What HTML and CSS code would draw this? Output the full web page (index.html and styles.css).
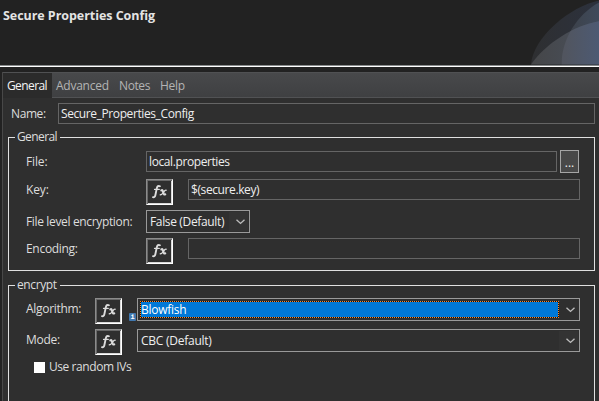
FILE: index.html
```html
<!DOCTYPE html>
<html lang="en">
<head>
<meta charset="utf-8">
<title>Secure Properties Config</title>
<link rel="stylesheet" href="styles.css">
</head>
<body>
<svg class="defs" width="0" height="0" aria-hidden="true">
  <symbol id="fx" viewBox="0 0 17 16">
    <g fill="none" stroke="#dcdcdc" stroke-linecap="round">
      <path stroke-width="1.9" d="M8.2 2.3C7 1.5 6.3 2.2 5.8 4.4L4.4 11C4 12.8 3.2 13.6 2 13.2"/>
      <path stroke-width="1.4" d="M8 2.2H9.2M3.6 5.4H8.2"/>
      <path stroke-width="2" d="M10.3 6.4C11.5 5.6 11.8 6.6 12.2 8.2S13 11.1 14.3 10.4"/>
      <path stroke-width="1.4" d="M15 6.2C13.3 5.7 11.4 11.3 9.3 10.8"/>
    </g>
  </symbol>
  <symbol id="chevron" viewBox="0 0 9 6">
    <path fill="none" stroke="#bcbcbc" stroke-width="1.4" d="M.5 .8L4.5 4.4L8.5 .8"/>
  </symbol>
</svg>
<header class="header">
  <h1>Secure Properties Config</h1>
  <svg class="arcs" width="69" height="65" viewBox="0 0 69 65">
    <defs>
      <linearGradient id="g1"><stop offset="0" stop-color="#2e2f31"/><stop offset="1" stop-color="#2c313d"/></linearGradient>
      <linearGradient id="g2"><stop offset="0" stop-color="#454648"/><stop offset="1" stop-color="#49505d"/></linearGradient>
      <linearGradient id="g3"><stop offset="0" stop-color="#3c3f45"/><stop offset="1" stop-color="#3f4a5b"/></linearGradient>
      <linearGradient id="g4"><stop offset="0" stop-color="#515257"/><stop offset=".5" stop-color="#51555f"/><stop offset="1" stop-color="#4d5a73"/></linearGradient>
      <clipPath id="inner"><path d="M31 65C31 39 47 14 69 2V65Z"/></clipPath>
    </defs>
    <path fill="url(#g1)" d="M0 65C2 37 40 6 69 0V65Z"/>
    <path fill="url(#g3)" d="M31 65C31 39 47 14 69 2V65Z"/>
    <path fill="url(#g2)" d="M0 65C14 44 44 25 69 21V65Z"/>
    <g clip-path="url(#inner)"><path fill="url(#g4)" d="M0 65C14 44 44 25 69 21V65Z"/></g>
  </svg>
</header>
<main class="editor">
  <nav class="tabs">
    <span class="tab active"><span class="t-general">General</span></span>
    <span class="tab t-advanced">Advanced</span>
    <span class="tab t-notes">Notes</span>
    <span class="tab t-help">Help</span>
  </nav>
  <div class="row name-row"><label class="t-name">Name:</label><div class="input t-value">Secure_Properties_Config</div></div>
  <fieldset class="general">
    <legend class="t-general">General</legend>
    <div class="row file"><label>File:</label><div class="input t-local">local.properties</div><button class="browse">...</button></div>
    <div class="row key"><label>Key:</label><span class="fx"><svg><use href="#fx"/></svg></span><div class="input t-key">$(secure.key)</div></div>
    <div class="row level"><label class="t-level">File level encryption:</label><div class="combo"><span class="t-false">False (Default)</span><i><svg><use href="#chevron"/></svg></i></div></div>
    <div class="row key"><label class="t-encoding">Encoding:</label><span class="fx"><svg><use href="#fx"/></svg></span><div class="input"></div></div>
  </fieldset>
  <fieldset class="encrypt">
    <legend class="t-encrypt">encrypt</legend>
    <div class="row option"><label class="t-algorithm">Algorithm:</label><span class="fx"><svg><use href="#fx"/></svg></span><div class="combo focus"><b class="info">i</b><span class="t-blow">Blowfish</span><i><svg><use href="#chevron"/></svg></i></div></div>
    <div class="row option"><label class="t-mode">Mode:</label><span class="fx"><svg><use href="#fx"/></svg></span><div class="combo"><span class="t-cbc">CBC (Default)</span><i><svg><use href="#chevron"/></svg></i></div></div>
    <div class="check"><span class="box"></span><span class="t-random">Use random IVs</span></div>
  </fieldset>
</main>
</body>
</html>
```
FILE: styles.css
```css
* { box-sizing: border-box; }
html, body { height: 100%; }
body {
  margin: 0;
  overflow: hidden;
  background: #222;
  color: #ddd;
  font: 12px/16px "Open Sans", "Noto Sans", sans-serif;
  letter-spacing: -0.15px;
  white-space: nowrap;
}
.defs { position: absolute; }
.header {
  display: flex;
  justify-content: space-between;
  height: 67px;
  border-bottom: 1px solid #fff;
  box-shadow: inset 0 -1px #888b8c;
}
h1 { margin: 8px 0 0 3px; font-size: 12.5px; line-height: 16px; font-weight: 700; color: #e4e4e4; letter-spacing: -0.05px; }
.arcs { width: 68px; height: 65px; }
.editor {
  height: 329px;
  margin: 5px 0 0 2px;
  border-left: 1px solid #484848;
  background: #2f2f2f;
}
.tabs {
  display: flex;
  height: 26px;
  background: linear-gradient(#48494b, #3f4042);
  border-top: 1px solid #505153;
  border-bottom: 1px solid #515254;
  color: #b4b4b4;
}
.tab { height: 25px; line-height: 26px; }
.active { width: 49px; padding-left: 4px; background: #2b2b2b; color: #f4f4f4; }
.t-general { letter-spacing: -0.6px; }
.t-encrypt { letter-spacing: -0.4px; }
.t-advanced { width: 63px; margin-left: 4px; letter-spacing: -0.25px; }
.t-notes { width: 41px; letter-spacing: -0.4px; }
.t-help { letter-spacing: -0.3px; }
.t-name { letter-spacing: -0.4px; }
.t-value, .t-local, .t-key { letter-spacing: -0.4px; }
.t-level, .t-false { letter-spacing: -0.35px; }
.t-encoding, .t-algorithm, .t-mode { letter-spacing: -0.3px; }
.t-blow, .t-cbc { letter-spacing: -0.25px; }
.t-random { letter-spacing: -0.43px; }
.row { display: flex; }
.row label { flex: none; }
.input {
  flex: 1;
  height: 21px;
  padding-left: 2px;
  border: 1px solid #656565;
  color: #eee;
  line-height: 20px;
}
.name-row { height: 21px; margin: 5px 4px 0 8px; }
.name-row label { width: 47px; line-height: 22px; }
fieldset {
  width: 587px;
  min-width: 0;
  margin: 0 0 0 5px;
  padding: 0;
  border: 1px solid #e0e0e0;
}
legend { margin-left: 6px; padding: 0 3px 0 2px; line-height: 16px; }
.general { height: 142px; margin-top: 5px; }
.encrypt { height: 135px; margin-top: 6px; }
fieldset .row { margin-left: 17px; }
.general .row { margin-right: 14px; }
.general label { width: 120px; line-height: 21px; }
.general .t-level { line-height: 24px; }
.file { height: 23px; margin-top: 5px; }
.file .input { flex: none; width: 411px; margin-top: 1px; }
.file label { margin-top: 1px; }
.browse {
  width: 19px;
  height: 23px;
  margin-left: 3px;
  padding: 2px 0 0;
  border: 1px solid #a5a5a5;
  background: #484848;
  color: #eee;
  font: inherit;
}
.key { height: 27px; margin-top: 6px; }
.key .input { margin-left: 15px; }
.fx {
  flex: none;
  display: flex;
  width: 27px;
  height: 26px;
  border: 1px solid #8c8c8c;
  border-right-color: #fff;
  border-bottom-color: #fff;
  box-shadow: inset 1px 1px #686868, inset -1px -1px #d8d8d8;
  padding: 4px 0 0 4px;
}
.fx svg { width: 17px; height: 16px; }
.combo {
  position: relative;
  display: flex;
  height: 23px;
  padding: 2px;
  border: 1px solid #999;
  color: #eee;
  line-height: 17px;
}
.combo > span { flex: 1; padding-left: 1px; }
.combo i { flex: none; width: 19px; background: #333; margin: -1px -1px -1px 0; padding: 7px 0 0 7px; display: block; }
.combo i svg { display: block; width: 9px; height: 6px; }
.level { height: 23px; margin-top: 4px; }
.level .combo { width: 104px; }
.level + .key { margin-top: 5px; }
.encrypt .row { height: 26px; margin-right: 14px; }
.option label { width: 69px; line-height: 22px; }
.option .combo { flex: 1; margin-left: 15px; }
.option { margin-top: 5px; }
.focus > span {
  padding-left: 0;
  border: 1px dotted #ff8728;
  background: linear-gradient(#0078d7, #0078d7) padding-box, #111;
  line-height: 15px;
  color: #fff;
}
.focus i { background: #2f2f2f; }
.info {
  position: absolute;
  left: -9px;
  top: 14px;
  width: 7px;
  height: 8px;
  border-radius: 1px;
  background: #4078b0;
  color: #fff;
  font: bold 7px/8px "Liberation Mono", monospace;
  letter-spacing: 0;
  text-align: center;
}
.check { display: flex; margin: 4px 0 0 25px; line-height: 16px; }
.box { width: 11px; height: 11px; margin: 3px 4px 0 0; background: #fff; }
```
